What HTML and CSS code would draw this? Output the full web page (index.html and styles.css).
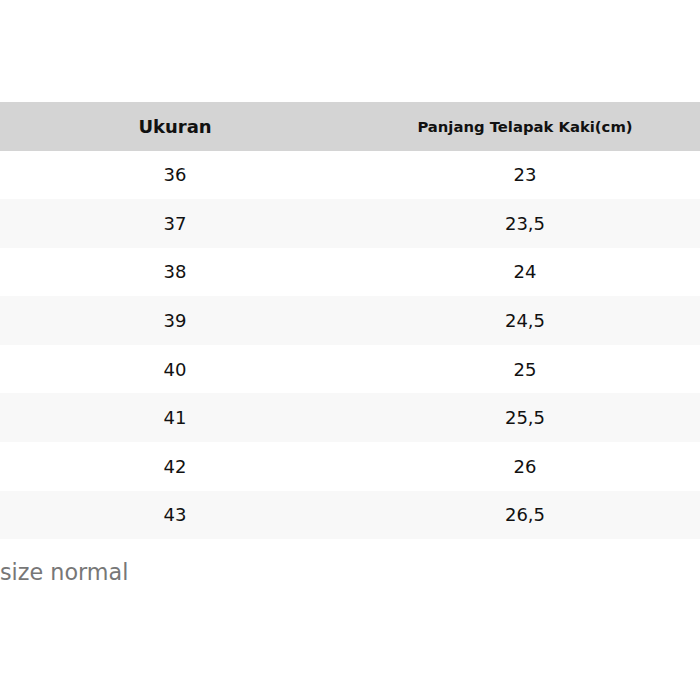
FILE: index.html
```html
<!DOCTYPE html>
<html lang="id">
<head>
<meta charset="utf-8">
<title>Ukuran</title>
<link rel="stylesheet" href="styles.css">
</head>
<body>
<div class="page">
  <table class="size-table">
    <thead>
      <tr><th class="h-size">Ukuran</th><th class="h-len">Panjang Telapak Kaki(cm)</th></tr>
    </thead>
    <tbody>
      <tr><td>36</td><td>23</td></tr>
      <tr><td>37</td><td>23,5</td></tr>
      <tr><td>38</td><td>24</td></tr>
      <tr><td>39</td><td>24,5</td></tr>
      <tr><td>40</td><td>25</td></tr>
      <tr><td>41</td><td>25,5</td></tr>
      <tr><td>42</td><td>26</td></tr>
      <tr><td>43</td><td>26,5</td></tr>
    </tbody>
  </table>
  <p class="note">size normal</p>
</div>
</body>
</html>
```

FILE: styles.css
```css
html, body {
  margin: 0;
  padding: 0;
  background: #ffffff;
}
body {
  font-family: "DejaVu Sans", sans-serif;
  color: #111111;
}
.page {
  padding-top: 102px;
}
.size-table {
  width: 700px;
  border-collapse: collapse;
  table-layout: fixed;
}
.size-table th,
.size-table td {
  width: 350px;
  padding: 0;
  text-align: center;
  vertical-align: middle;
  height: 48.6px;
}
.size-table th {
  background: #d4d4d4;
  font-weight: bold;
  color: #111111;
  height: 48.5px;
}
.h-size {
  font-size: 18px;
}
.h-len {
  font-size: 14.8px;
}
.size-table td {
  font-size: 18px;
}
.size-table tbody tr:nth-child(even) td {
  background: #f8f8f8;
}
.note {
  margin: 20px 0 0 0;
  font-size: 22.3px;
  line-height: 26px;
  color: #777777;
}
```
